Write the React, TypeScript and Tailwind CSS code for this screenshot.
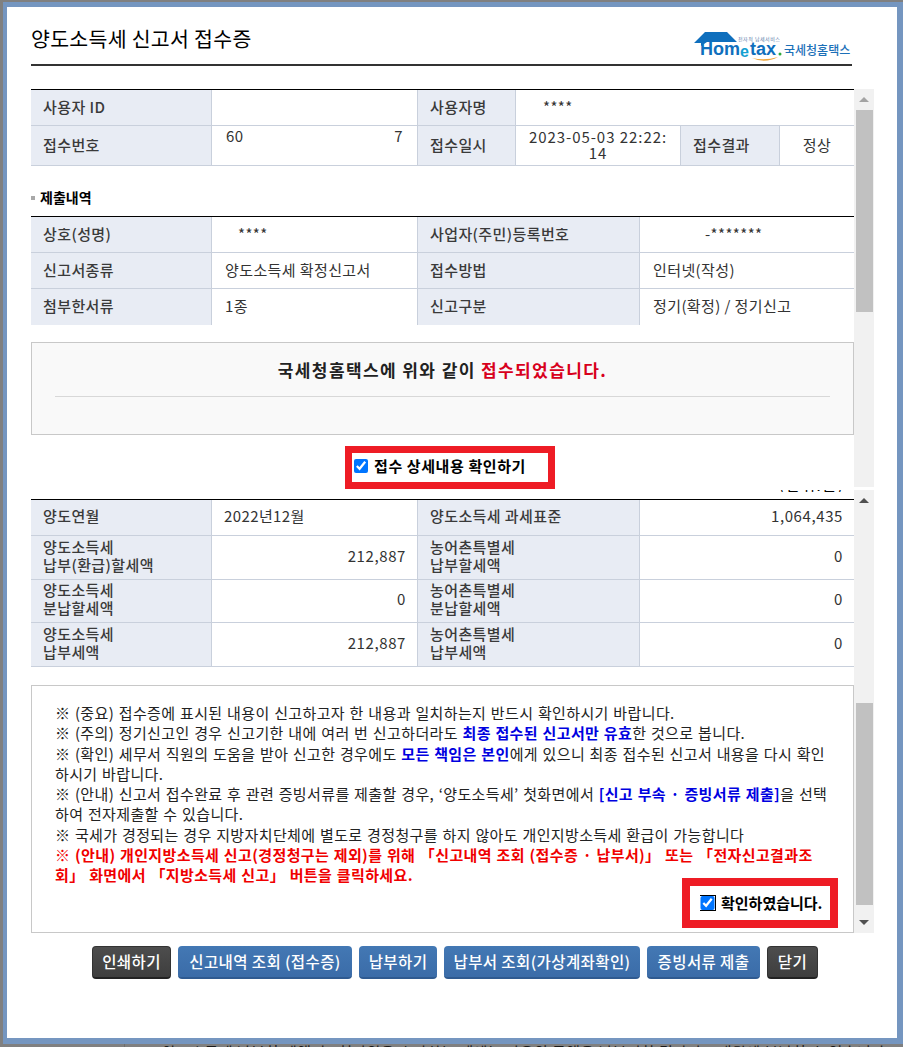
import React from "react";

const FONT = '"Noto Sans CJK KR", "Liberation Sans", sans-serif';
const ARIAL = { fontFamily: '"Liberation Sans", sans-serif' };
const th = "bg-[#e8ecf4] text-[#3a3a3a] font-medium text-[15px] tracking-[0.4px] flex items-center pl-3 pb-[2px] border-r border-[#c9d0dc] leading-[18px]";
const td = "text-[#333] text-[15px] tracking-[0.4px] flex items-center pb-[2px] border-r border-[#c9d0dc] leading-[18px]";
const num = `${td} justify-end pr-[11px] !tracking-[0.6px]`;

function Scrollbar({ h, thumbTop, thumbH, dark }: { h: number; thumbTop: number; thumbH: number; dark?: boolean }) {
  return (
    <div className="w-[20px] shrink-0 bg-[#f1f1f1] flex flex-col items-center" style={{ height: h }}>
      <div className="h-[21px] w-full flex items-center justify-center shrink-0">
        <div className={`w-0 h-0 border-x-[5px] border-x-transparent border-b-[5px] ${dark ? "border-b-[#505050]" : "border-b-[#a3a3a3]"}`} />
      </div>
      <div className="w-[17px] bg-[#c1c1c1] shrink-0" style={{ marginTop: thumbTop, height: thumbH }} />
      {dark && (
        <div className="h-[21px] w-full flex items-center justify-center shrink-0 mt-auto">
          <div className="w-0 h-0 border-x-[5px] border-x-transparent border-t-[5px] border-t-[#505050]" />
        </div>
      )}
    </div>
  );
}

function Row({ h, cols, children }: { h: number; cols: string; children: React.ReactNode }) {
  return (
    <div className={`grid ${cols} border-b border-[#c9d0dc]`} style={{ height: h }}>
      {children}
    </div>
  );
}

const C4 = "grid-cols-[181px_206px_222px_214px]";
const C6 = "grid-cols-[181px_206px_98px_165px_99px_74px]";

function Btn({ children, dark, w }: { children: React.ReactNode; dark?: boolean; w: number }) {
  return (
    <button
      type="button"
      style={{ width: w }}
      className={`h-[33px] rounded-[4px] text-white text-[15.5px] tracking-[0.4px] font-medium flex items-center justify-center whitespace-nowrap border-b-2 ${
        dark
          ? "bg-gradient-to-b from-[#4d4d4d] to-[#3e3e3e] border-b-[#222] border-x border-t border-[#333]"
          : "bg-gradient-to-b from-[#4378b4] to-[#3b6ca8] border-b-[#2f5a90]"
      }`}
    >
      {children}
    </button>
  );
}

function Logo() {
  return (
    <div className="relative w-[160px] h-[34px] shrink-0">
      <svg className="absolute left-0 top-0" width="160" height="36" viewBox="0 0 160 36">
        <path d="M2 16 L13 5 H35 L45 15 H15 L9 19 V16 Z" fill="#0f6fbd" />
        <path d="M60 31 Q73 37 86 30 Q73 34 60 31 Z" fill="#f0a63a" />
        <circle cx="88" cy="27" r="1.5" fill="#2faa3c" />
      </svg>
      <span className="absolute left-[8px] top-[12px] text-[18px] font-bold leading-[20px] text-[#0f6fbd]" style={ARIAL}>Hom</span>
      <span className="absolute left-[48px] top-[16px] text-[16px] font-bold leading-[18px] text-[#14a0d2]" style={ARIAL}>e</span>
      <span className="absolute left-[58px] top-[12px] text-[18px] font-bold leading-[20px] text-[#0f6fbd]" style={ARIAL}>tax</span>
      <span className="absolute left-[46px] top-[9px] text-[5px] leading-[6px] text-[#5578a8] tracking-[0.5px] whitespace-nowrap">전자적 납세서비스</span>
      <span className="absolute left-[92px] top-[16px] text-[12px] font-medium leading-[14px] text-[#1c70b8] whitespace-nowrap">국세청홈택스</span>
    </div>
  );
}

export default function App() {
  return (
    <div className="w-[903px] h-[1047px] overflow-hidden bg-[#808080] flex flex-col" style={{ fontFamily: FONT }}>
      <div className="mt-[2px] ml-[3px] w-[900px] h-[1042px] shrink-0 border-[#7596c0] border-t-[5px] border-l-[4px] border-r-[6px] border-b-[6px] bg-white relative">
        <div className="pl-[24px] pr-[45px] w-full">
          <div className="h-[59px] border-b-2 border-[#333] flex items-end justify-between pb-[3px]">
            <h1 className="text-[20.5px] text-black leading-[26px] mb-[10px] font-normal tracking-[0.3px] whitespace-nowrap">양도소득세 신고서 접수증</h1>
            <Logo />
          </div>
        </div>

        {/* first panel */}
        <div className="flex pl-[24px] mt-[23px]">
          <div className="w-[823px] h-[398px] overflow-hidden">
            <div className="border-t border-black">
              <Row h={36} cols={C6}>
                <div className={th}>사용자 ID</div>
                <div className={td} />
                <div className={th}>사용자명</div>
                <div className={`${td} pl-[27px] col-span-3 border-r-0`}>****</div>
              </Row>
              <Row h={40} cols={C6}>
                <div className={th}>접수번호</div>
                <div className={`${td} !items-start pt-[1px] px-[14px] justify-between`}><span>60</span><span>7</span></div>
                <div className={th}>접수일시</div>
                <div className={`${td} !tracking-[0.95px] text-center justify-center !leading-[16px] whitespace-nowrap`}>2023-05-03 22:22:<br />14</div>
                <div className={th}>접수결과</div>
                <div className={`${td} justify-center border-r-0`}>정상</div>
              </Row>
            </div>
            <div className="h-[50px] flex items-end pb-[10px] gap-[5px]">
              <span className="w-[4px] h-[4px] bg-[#a8a8a8] mb-[6px]" />
              <span className="text-[14px] font-bold text-black leading-[18px]">제출내역</span>
            </div>
            <div className="border-t border-black">
              <Row h={36} cols={C4}>
                <div className={th}>상호(성명)</div>
                <div className={`${td} pl-[26px]`}>****</div>
                <div className={th}>사업자(주민)등록번호</div>
                <div className={`${td} pl-[65px] border-r-0`}>-*******</div>
              </Row>
              <Row h={36} cols={C4}>
                <div className={th}>신고서종류</div>
                <div className={`${td} pl-[13px]`}>양도소득세 확정신고서</div>
                <div className={th}>접수방법</div>
                <div className={`${td} pl-[13px] border-r-0`}>인터넷(작성)</div>
              </Row>
              <div className={`grid ${C4} h-[36px]`}>
                <div className={th}>첨부한서류</div>
                <div className={`${td} pl-[13px]`}>1종</div>
                <div className={th}>신고구분</div>
                <div className={`${td} pl-[13px] border-r-0`}>정기(확정) / 정기신고</div>
              </div>
            </div>
            <div className="mt-[17px] h-[93px] border border-[#c8c8c8] bg-[#f9f9f9] px-[23px] pt-[15px]">
              <p className="text-center text-[17px] font-bold leading-[24px] text-[#222] h-[39px] border-b border-[#d8d8d8] tracking-[1.4px] whitespace-nowrap">
                국세청홈택스에 위와 같이 <span className="text-[#d8001c]">접수되었습니다.</span>
              </p>
            </div>
          </div>
          <Scrollbar h={398} thumbTop={0} thumbH={202} />
        </div>

        {/* second panel */}
        <div className="flex pl-[24px] mt-[3px]">
          <div className="w-[823px] h-[443px] overflow-hidden">
            <div className="h-[2px] overflow-hidden flex items-end justify-end pr-[10px] mb-[7px]">
              <span className="text-[15px] leading-[14px] tracking-[1.5px] text-black whitespace-nowrap shrink-0">(단위:원)</span>
            </div>
            <div className="border-t border-black [&>div>div]:!pb-[4px]">
              <Row h={36} cols={C4}>
                <div className={th}>양도연월</div>
                <div className={`${td} pl-[12px]`}>2022년12월</div>
                <div className={th}>양도소득세 과세표준</div>
                <div className={`${num} border-r-0`}>1,064,435</div>
              </Row>
              <Row h={44} cols={C4}>
                <div className={th}><span>양도소득세<br />납부(환급)할세액</span></div>
                <div className={num}>212,887</div>
                <div className={th}><span>농어촌특별세<br />납부할세액</span></div>
                <div className={`${num} border-r-0`}>0</div>
              </Row>
              <Row h={43} cols={C4}>
                <div className={th}><span>양도소득세<br />분납할세액</span></div>
                <div className={num}>0</div>
                <div className={th}><span>농어촌특별세<br />분납할세액</span></div>
                <div className={`${num} border-r-0`}>0</div>
              </Row>
              <Row h={44} cols={C4}>
                <div className={th}><span>양도소득세<br />납부세액</span></div>
                <div className={num}>212,887</div>
                <div className={th}><span>농어촌특별세<br />납부세액</span></div>
                <div className={`${num} border-r-0`}>0</div>
              </Row>
            </div>
            <div className="mt-[18px] h-[248px] border border-[#c8c8c8] pl-[23px] pr-[10px] pt-[17px] text-[15px] tracking-[0.38px] [word-spacing:0.8px] leading-[20.3px] text-[#222] whitespace-nowrap">
              <p>※ (중요) 접수증에 표시된 내용이 신고하고자 한 내용과 일치하는지 반드시 확인하시기 바랍니다.</p>
              <p>※ (주의) 정기신고인 경우 신고기한 내에 여러 번 신고하더라도 <b className="text-[#0000e0]">최종 접수된 신고서만 유효</b>한 것으로 봅니다.</p>
              <p>※ (확인) 세무서 직원의 도움을 받아 신고한 경우에도 <b className="text-[#0000e0]">모든 책임은 본인</b>에게 있으니 최종 접수된 신고서 내용을 다시 확인<br />하시기 바랍니다.</p>
              <p>※ (안내) 신고서 접수완료 후 관련 증빙서류를 제출할 경우, ‘양도소득세’ 첫화면에서 <b className="text-[#0000e0]">[신고 부속 · 증빙서류 제출]</b>을 선택<br />하여 전자제출할 수 있습니다.</p>
              <p>※ 국세가 경정되는 경우 지방자치단체에 별도로 경정청구를 하지 않아도 개인지방소득세 환급이 가능합니다</p>
              <p className="font-bold text-[#f00000]">※ (안내) 개인지방소득세 신고(경정청구는 제외)를 위해 「신고내역 조회 (접수증 · 납부서)」 또는 「전자신고결과조<br />회」 화면에서 「지방소득세 신고」 버튼을 클릭하세요.</p>
            </div>
          </div>
          <Scrollbar h={443} thumbTop={192} thumbH={202} dark />
        </div>

        {/* buttons */}
        <div className="flex pl-[85px] gap-[7px] mt-[13px]">
          <Btn dark w={79}>인쇄하기</Btn>
          <Btn w={174}>신고내역 조회 (접수증)</Btn>
          <Btn w={78}>납부하기</Btn>
          <Btn w={196}>납부서 조회(가상계좌확인)</Btn>
          <Btn w={113}>증빙서류 제출</Btn>
          <Btn dark w={51}>닫기</Btn>
        </div>

        {/* red annotation boxes */}
        <div className="absolute left-[338px] top-[439px] w-[210px] h-[43px] border-[7px] border-[#ee1c25] bg-white flex items-center pl-[2px] pb-[3px] gap-[6px]">
          <input type="checkbox" defaultChecked className="w-[14px] h-[14px] m-0 accent-[#0075ff]" />
          <span className="text-[15px] tracking-[0.6px] font-bold text-black whitespace-nowrap leading-[18px]">접수 상세내용 확인하기</span>
        </div>
        <div className="absolute left-[675px] top-[871px] w-[156px] h-[50px] border-[8px] border-[#ee1c25] bg-white flex items-center pl-[10px] gap-[5px]">
          <span className="w-[16px] h-[16px] flex items-center justify-start border-t border-r border-b border-black">
            <input type="checkbox" defaultChecked className="w-[15px] h-[14px] m-0 accent-[#0075ff]" />
          </span>
          <span className="text-[15px] font-bold text-black whitespace-nowrap leading-[18px]">확인하였습니다.</span>
        </div>
      </div>
      <div className="h-[3px] overflow-hidden flex">
        <div className="w-[125px] border-r border-[#6e6e6e] h-full shrink-0" />
        <p className="pl-[37px] text-[15px] tracking-[0.4px] leading-[16px] text-[#1a1a1a] whitespace-nowrap">양도소득세 납부할 세액이 1천만원을 초과하는 때에는 다음의 금액을 납부기한 경과 후 2개월에 분납할 수 있습니다</p>
      </div>
    </div>
  );
}
